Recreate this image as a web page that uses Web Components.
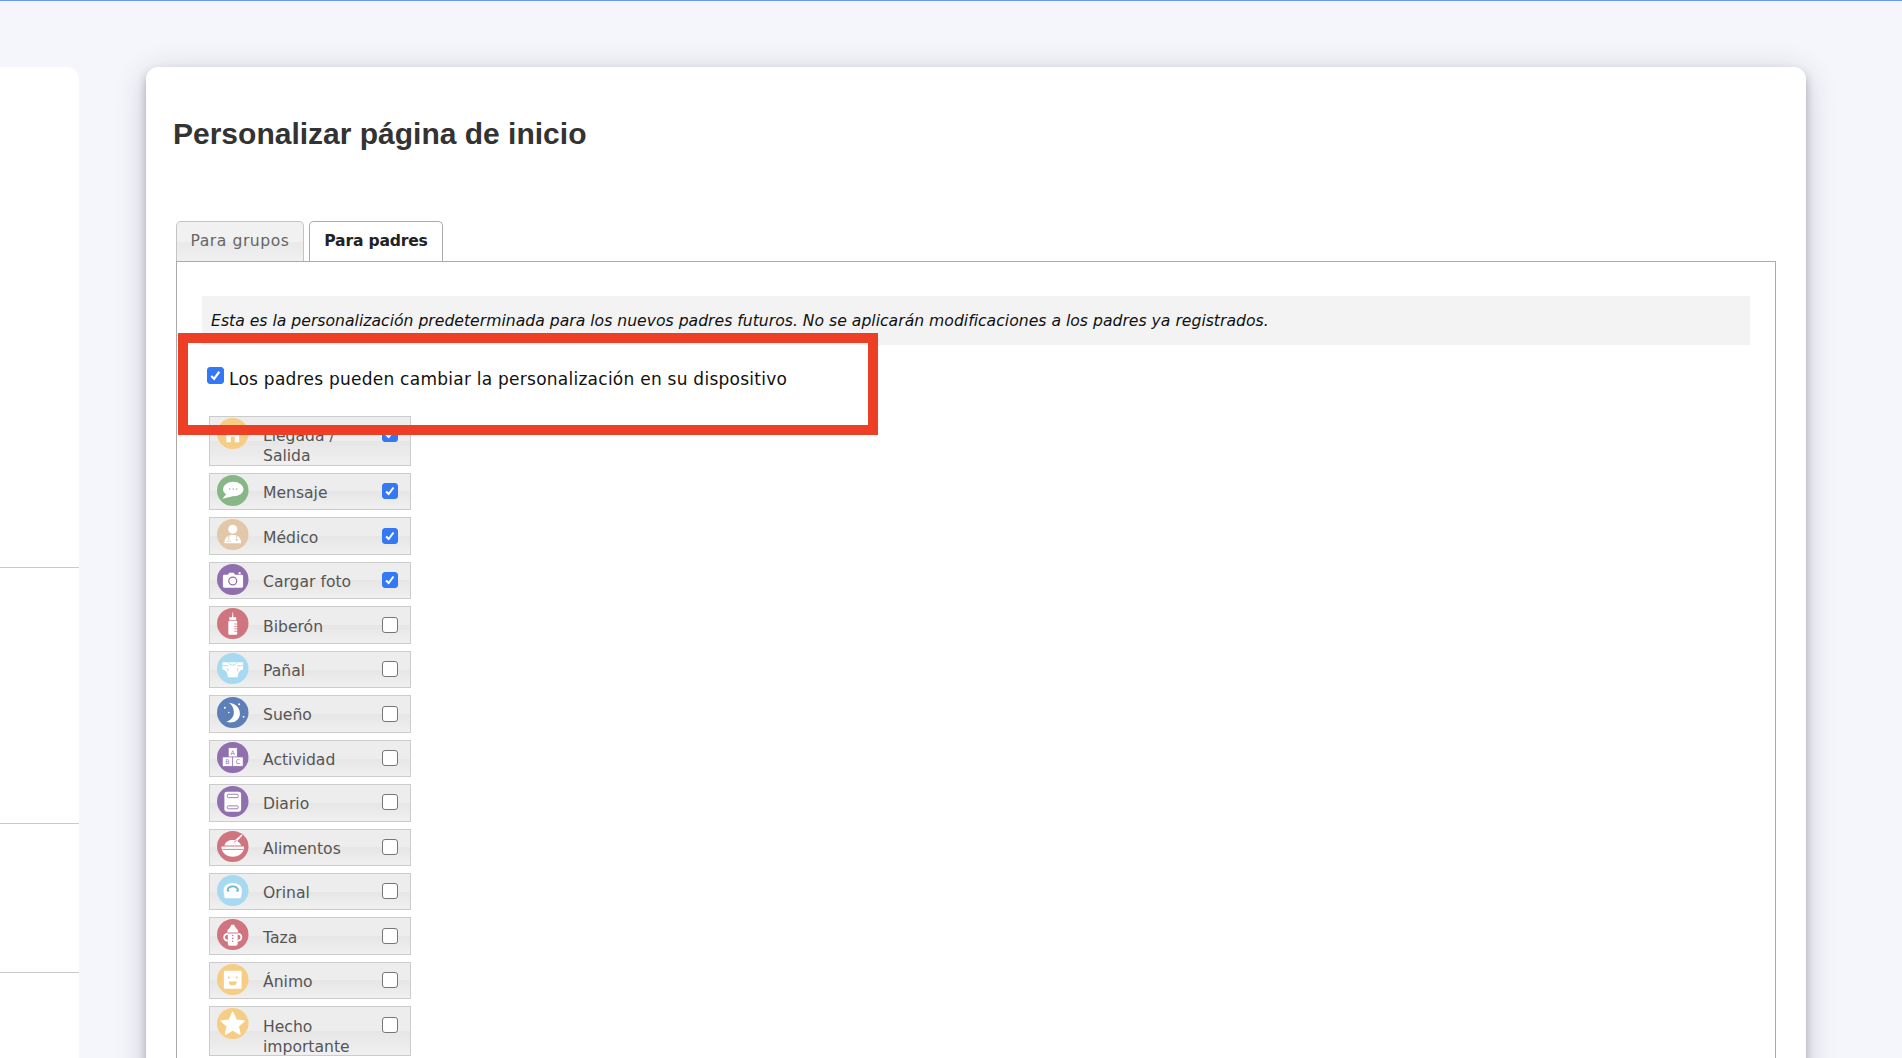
<!DOCTYPE html>
<html lang="es">
<head>
<meta charset="utf-8">
<title>Personalizar página de inicio</title>
<style>
    html, body {
        margin: 0;
        height: 100%;
        overflow: hidden;
        background: #f4f6fb;
    }
</style>
</head>
<body>
<home-page>
    <side-panel slot="side"></side-panel>
    <settings-card title="Personalizar página de inicio">
        <tab-bar></tab-bar>
        <tab-box>
            <info-note>Esta es la personalización predeterminada para los nuevos padres futuros. No se aplicarán modificaciones a los padres ya registrados.</info-note>
            <parent-option>Los padres pueden cambiar la personalización en su dispositivo</parent-option>
            <feature-list>
                <feature-row icon="house" tall checked>Llegada / Salida</feature-row>
                <feature-row icon="message" checked>Mensaje</feature-row>
                <feature-row icon="medic" checked>Médico</feature-row>
                <feature-row icon="camera" checked>Cargar foto</feature-row>
                <feature-row icon="bottle">Biberón</feature-row>
                <feature-row icon="diaper">Pañal</feature-row>
                <feature-row icon="moon">Sueño</feature-row>
                <feature-row icon="blocks">Actividad</feature-row>
                <feature-row icon="diary">Diario</feature-row>
                <feature-row icon="food">Alimentos</feature-row>
                <feature-row icon="potty">Orinal</feature-row>
                <feature-row icon="cup">Taza</feature-row>
                <feature-row icon="mood">Ánimo</feature-row>
                <feature-row icon="star" tall>Hecho importante</feature-row>
            </feature-list>
        </tab-box>
    </settings-card>
    <red-mark slot="over"></red-mark>
</home-page>

<script>
    const ICONS = {
        house: ['#f6cd85', `<path fill="#fff" d="M16 7 25 15.5H22.5V25H18V19H14V25H9.5V15.5H7Z"/>`],
        message: ['#87b787', `<ellipse cx="16.5" cy="14.5" rx="10.5" ry="7.5" fill="#fff"/><path fill="#fff" d="M10 19 5.5 24.5 16 22Z"/><g fill="#87b787"><circle cx="13" cy="14.5" r=".8"/><circle cx="16.5" cy="14.5" r=".8"/><circle cx="20" cy="14.5" r=".8"/></g>`],
        medic: ['#e2c8a8', `<circle cx="16" cy="10.5" r="4.6" fill="#fff"/><path fill="#fff" d="M7.5 25C7.5 19 11 16.5 16 16.5S24.5 19 24.5 25Z"/><path fill="none" stroke="#e2c8a8" stroke-width=".9" d="M12 17V21.5M20 17V20M10 24C10 22 14 22 14 24"/><circle cx="20" cy="21.5" r="1.2" fill="#e2c8a8"/>`],
        camera: ['#8f6fae', `<path fill="#fff" d="M7.5 11H11L12.5 9H17L18.5 11H25A1.5 1.5 0 0 1 26.5 12.5V23A1.5 1.5 0 0 1 25 24.5H7.5A1.5 1.5 0 0 1 6 23V12.5A1.5 1.5 0 0 1 7.5 11Z"/><circle cx="16" cy="17.5" r="4" fill="#fff" stroke="#8f6fae" stroke-width="1.3"/><circle cx="23" cy="9.5" r="1.2" fill="#fff"/>`],
        bottle: ['#cf7580', `<path fill="#fff" d="M15.3 9.5 15.7 4.5H16.3L16.7 9.5H19.5V12.5L20.5 14.5V26.5A1 1 0 0 1 19.5 27.5H12.5A1 1 0 0 1 11.5 26.5V14.5L12.5 12.5V9.5Z"/><path stroke="#cf7580" stroke-width=".8" d="M12 12.8H20M17.5 16.5H20.5M17.5 19H20.5M17.5 21.5H20.5M17.5 24H20.5"/>`],
        diaper: ['#a7d9f0', `<path fill="#fff" d="M5.5 9.5H26.5V17C23 17.5 21.5 20 21 25H11C10.5 20 9 17.5 5.5 17Z"/><path fill="none" stroke="#a7d9f0" stroke-width=".9" d="M5.5 13H11.5M20.5 13H26.5M11.5 9.5C12.5 13.5 19.5 13.5 20.5 9.5M11 15.5V19M21 15.5V19"/>`],
        moon: ['#5c7fb8', `<path fill="#fff" d="M12 6C19.5 6.5 24 12 23.2 18.5C22.3 24 16.5 28 9.5 25.5C14.5 24 17.8 20 17 14.5C16.5 10.5 15 8 12 6Z"/><g fill="#fff"><circle cx="8" cy="11" r="1"/><circle cx="12" cy="16" r=".8"/><circle cx="22.5" cy="7.5" r="1"/><circle cx="27" cy="20.5" r="1"/></g>`],
        blocks: ['#8f6fae', `<g fill="#fff" stroke="#8f6fae" stroke-width=".6"><rect x="11.5" y="6" width="9" height="9.5"/><rect x="5.5" y="15.5" width="10.5" height="9.5"/><rect x="16" y="15.5" width="10.5" height="9.5"/></g><g fill="#8f6fae" font-family="'DejaVu Sans', sans-serif" font-size="6.5" text-anchor="middle"><text x="16" y="13.2">A</text><text x="10.7" y="22.7">B</text><text x="21.2" y="22.7">C</text></g>`],
        diary: ['#8f6fae', `<rect x="7.5" y="6" width="17" height="20.5" rx="2.5" fill="#fff"/><g fill="none" stroke="#8f6fae" stroke-width=".9"><rect x="10.5" y="8.5" width="11" height="3.5" rx="1"/><rect x="10.5" y="20.5" width="11" height="3" rx="1"/></g>`],
        food: ['#cf7580', `<path fill="#fff" d="M4.5 16H27.5C27.5 22 23 26.5 16 26.5S4.5 22 4.5 16Z"/><path fill="#fff" d="M7.5 15C9 10 14 8.5 18 9.5L25 3.5 26 4.5 20.5 10.5C22.5 11.500 24 13 24.5 15Z"/><path stroke="#cf7580" stroke-width=".9" d="M5.5 19H26.5M17 12 20 9.5"/>`],
        potty: ['#a7d9f0', `<path fill="#fff" d="M8 24C7 19 5.5 14 8.5 11C12 7.5 20 7.5 23.5 11C26.5 14 25 19 24 24Z"/><path fill="none" stroke="#6fb4cf" stroke-width="1.8" d="M10.5 15.5C12.5 10.5 19.5 10.5 21.5 15.5"/><path fill="#6fb4cf" d="M10 15.5H12.5V17H10ZM19.5 15.5H22V17H19.5Z"/>`],
        cup: ['#cf7580', `<path fill="#fff" d="M10.5 13C10.5 10.5 13.5 10 14.5 6H17.5C18.5 10 21.5 10.5 21.5 13V14H10.5ZM11 15H21V25.5A2 2 0 0 1 19 27.5H13A2 2 0 0 1 11 25.5Z"/><path fill="none" stroke="#fff" stroke-width="1.8" d="M11 15.5C6 15 6 22 11 22.5M21 15.5C26 15 26 22 21 22.5"/><g fill="#cf7580"><circle cx="16" cy="17" r=".8"/><circle cx="16" cy="20" r=".8"/><circle cx="16" cy="23" r=".8"/></g>`],
        mood: ['#f6cd85', `<rect x="7" y="7" width="18" height="18.5" rx="1" fill="#fff"/><g fill="#f6cd85"><circle cx="12" cy="14" r="1.1"/><circle cx="20" cy="14" r="1.1"/><path d="M12 18H20A4 4 0 0 1 12 18Z"/></g>`],
        star: ['#f6cd85', `<path fill="#fff" stroke="#fff" stroke-width="1.5" stroke-linejoin="round" d="M16 4.5 19.5 12.5 27.5 13.3 21.5 18.8 23.3 27 16 22.7 8.7 27 10.5 18.8 4.5 13.3 12.5 12.5Z"/>`]
    };

    class HomePage extends HTMLElement {
        constructor() {
            super();
            this.attachShadow({mode: 'open'}).innerHTML = `
                <style>
                    :host {
                        display: block;
                        position: relative;
                        height: 1058px;
                        overflow: hidden;
                        box-sizing: border-box;
                        border-top: 1px solid #6d97f7;
                        background: #f4f6fb;
                    }
                    .columns {
                        display: flex;
                        gap: 67px;
                        padding-top: 66px;
                    }
                </style>
                <div class="columns">
                    <slot name="side"></slot>
                    <slot></slot>
                </div>
                <slot name="over"></slot>
            `;
        }
    }

    class SidePanel extends HTMLElement {
        constructor() {
            super();
            this.attachShadow({mode: 'open'}).innerHTML = `
                <style>
                    :host {
                        display: block;
                        flex: none;
                        width: 79px;
                        height: 1100px;
                        background: #fff;
                        border-radius: 0 12px 0 0;
                    }
                    div {
                        border-bottom: 1px solid #c8c8c8;
                        box-sizing: border-box;
                    }
                </style>
                <div style="height: 501px"></div>
                <div style="height: 256px"></div>
                <div style="height: 149px"></div>
            `;
        }
    }

    class SettingsCard extends HTMLElement {
        constructor() {
            super();
            this.attachShadow({mode: 'open'}).innerHTML = `
                <style>
                    :host {
                        display: block;
                        flex: none;
                        width: 1660px;
                        height: 1100px;
                        box-sizing: border-box;
                        padding: 0 30px;
                        background: #fff;
                        border-radius: 12px 12px 0 0;
                        box-shadow: 0 5px 8px rgba(40, 42, 60, .3), 0 6px 32px rgba(40, 42, 60, .2);
                    }
                    h1 {
                        margin: 0 0 0 -3px;
                        padding: 42px 0 62px;
                        font: bold 30px/50px "Liberation Sans", Arial, sans-serif;
                        color: #333;
                    }
                </style>
                <h1></h1>
                <slot></slot>
            `;
        }

        connectedCallback() {
            this.shadowRoot.querySelector('h1').textContent = this.getAttribute('title');
            this.removeAttribute('title');
        }
    }

    class TabBar extends HTMLElement {
        constructor() {
            super();
            this.attachShadow({mode: 'open'}).innerHTML = `
                <style>
                    :host {
                        display: flex;
                        gap: 5px;
                        height: 40px;
                        font: 15.6px/39px "DejaVu Sans", Verdana, sans-serif;
                    }
                    span {
                        box-sizing: border-box;
                        border: 1px solid #c4c4c4;
                        border-bottom: 0;
                        border-radius: 5px 5px 0 0;
                        text-align: center;
                    }
                    .off {
                        width: 128px;
                        color: #666;
                        letter-spacing: .55px;
                        background: linear-gradient(#f1f1f1 50%, #e9e9e9 50%, #f0f0f0);
                    }
                    .on {
                        width: 134px;
                        color: #222;
                        font-weight: bold;
                        letter-spacing: -.2px;
                        background: #fff;
                        border-color: #aaa;
                    }
                </style>
                <span class="off">Para grupos</span>
                <span class="on">Para padres</span>
            `;
        }
    }

    class TabBox extends HTMLElement {
        constructor() {
            super();
            this.attachShadow({mode: 'open'}).innerHTML = `
                <style>
                    :host {
                        display: block;
                        width: 1600px;
                        height: 900px;
                        box-sizing: border-box;
                        border: 1px solid #aaa;
                        padding: 34px 25px 0;
                    }
                </style>
                <slot></slot>
            `;
        }
    }

    class InfoNote extends HTMLElement {
        constructor() {
            super();
            this.attachShadow({mode: 'open'}).innerHTML = `
                <style>
                    :host {
                        display: block;
                        height: 49px;
                        box-sizing: border-box;
                        padding-left: 9px;
                        background: #f3f3f3;
                        color: #111;
                        font: italic 15.65px/49px "DejaVu Sans", Verdana, sans-serif;
                    }
                </style>
                <slot></slot>
            `;
        }
    }

    class CheckMark extends HTMLElement {
        constructor() {
            super();
            this.attachShadow({mode: 'open'}).innerHTML = `
                <style>
                    :host {
                        display: block;
                        flex: none;
                        box-sizing: border-box;
                        width: var(--check-size, 16px);
                        height: var(--check-size, 16px);
                        border: 1px solid #767676;
                        border-radius: 3px;
                        background: #fff;
                    }
                    :host([checked]) {
                        border-color: #3478f6;
                        background: #3478f6;
                    }
                    svg {
                        display: none;
                        width: 100%;
                        height: 100%;
                    }
                    :host([checked]) svg {
                        display: block;
                    }
                </style>
                <svg viewBox="0 0 16 16"><path fill="none" stroke="#fff" stroke-width="2.3" d="M3.5 8.5 6.5 11.5 12 4"/></svg>
            `;
        }
    }

    class ParentOption extends HTMLElement {
        constructor() {
            super();
            this.attachShadow({mode: 'open'}).innerHTML = `
                <style>
                    :host {
                        display: flex;
                        gap: 5px;
                        height: 71px;
                        box-sizing: border-box;
                        padding: 22px 0 0 5px;
                        color: #111;
                        font: 17px/24px "DejaVu Sans", Verdana, sans-serif;
                        letter-spacing: .25px;
                    }
                    check-mark {
                        --check-size: 17px;
                    }
                </style>
                <check-mark checked></check-mark>
                <span><slot></slot></span>
            `;
        }
    }

    class FeatureList extends HTMLElement {
        constructor() {
            super();
            this.attachShadow({mode: 'open'}).innerHTML = `
                <style>
                    :host {
                        display: flex;
                        flex-direction: column;
                        gap: 7px;
                        width: 202px;
                        margin-left: 7px;
                    }
                </style>
                <slot></slot>
            `;
        }
    }

    class FeatureIcon extends HTMLElement {
        connectedCallback() {
            const [colour, shapes] = ICONS[this.getAttribute('name')];
            this.attachShadow({mode: 'open'}).innerHTML = `
                <style>
                    :host {
                        display: block;
                        flex: none;
                        width: 31.5px;
                        height: 31px;
                    }
                    svg {
                        display: block;
                        width: 100%;
                        height: 100%;
                    }
                </style>
                <svg viewBox="0 0 32 32" preserveAspectRatio="none"><circle cx="16" cy="16" r="16" fill="${colour}"/>${shapes}</svg>
            `;
        }
    }

    class FeatureRow extends HTMLElement {
        connectedCallback() {
            this.attachShadow({mode: 'open'}).innerHTML = `
                <style>
                    :host {
                        display: flex;
                        align-items: flex-start;
                        height: 37.45px;
                        box-sizing: border-box;
                        border: 1px solid #ccc;
                        padding: 1px 0 0 7px;
                        background: linear-gradient(#ededed 50%, #e6e6e6 50%, #f0f0f0);
                        color: #555;
                        font: 15.6px/20px "DejaVu Sans", Verdana, sans-serif;
                    }
                    :host([tall]) {
                        height: 50px;
                    }
                    .label {
                        width: 105px;
                        margin: 8.3px 0 0 14.5px;
                        flex: none;
                    }
                    check-mark {
                        margin: 8.4px 0 0 14px;
                    }
                </style>
                <feature-icon name="${this.getAttribute('icon')}"></feature-icon>
                <span class="label"><slot></slot></span>
                <check-mark ${this.hasAttribute('checked') ? 'checked' : ''}></check-mark>
            `;
        }
    }

    class RedMark extends HTMLElement {
        constructor() {
            super();
            this.attachShadow({mode: 'open'}).innerHTML = `
                <style>
                    :host {
                        position: absolute;
                        left: 178px;
                        top: 332px;
                        width: 700px;
                        height: 102px;
                        box-sizing: border-box;
                        border: 10px solid #ec3f25;
                    }
                </style>
            `;
        }
    }

    customElements.define('home-page', HomePage);
    customElements.define('side-panel', SidePanel);
    customElements.define('settings-card', SettingsCard);
    customElements.define('tab-bar', TabBar);
    customElements.define('tab-box', TabBox);
    customElements.define('info-note', InfoNote);
    customElements.define('check-mark', CheckMark);
    customElements.define('parent-option', ParentOption);
    customElements.define('feature-list', FeatureList);
    customElements.define('feature-icon', FeatureIcon);
    customElements.define('feature-row', FeatureRow);
    customElements.define('red-mark', RedMark);
</script>
</body>
</html>
